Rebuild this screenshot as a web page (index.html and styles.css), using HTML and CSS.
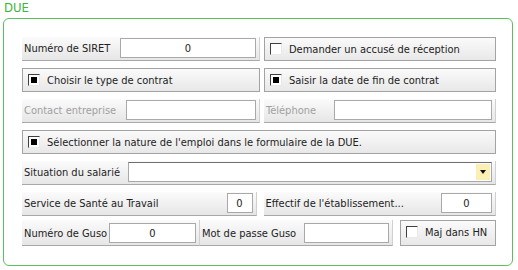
FILE: index.html
```html
<!DOCTYPE html>
<html lang="fr">

<head>
    <meta charset="UTF-8">
    <title>DUE</title>
    <link rel="stylesheet" href="styles.css">
</head>

<body>
    <div class="due">
        <div class="due-title">DUE</div>
        <div class="group">
            <div class="row">
                <div class="field left">
                    <span class="label">Numéro de SIRET</span>
                    <input class="box num siret" type="text" value="0">
                </div>
                <label class="check right">
                    <span class="tick"></span>Demander un accusé de réception
                </label>
            </div>
            <div class="row">
                <label class="check left">
                    <span class="tick on"></span>Choisir le type de contrat
                </label>
                <label class="check right">
                    <span class="tick on"></span>Saisir la date de fin de contrat
                </label>
            </div>
            <div class="row">
                <div class="field left disabled">
                    <span class="label">Contact entreprise</span>
                    <input class="box contact" type="text" disabled>
                </div>
                <div class="field right disabled">
                    <span class="label">Téléphone</span>
                    <input class="box phone" type="text" disabled>
                </div>
            </div>
            <div class="row">
                <label class="check full">
                    <span class="tick on"></span>Sélectionner la nature de l'emploi dans le formulaire de la DUE.
                </label>
            </div>
            <div class="row">
                <div class="field full">
                    <span class="label">Situation du salarié</span>
                    <div class="box combo">
                        <span class="combo-btn"></span>
                    </div>
                </div>
            </div>
            <div class="row">
                <div class="field sante">
                    <span class="label">Service de Santé au Travail</span>
                    <input class="box num small" type="text" value="0">
                </div>
                <div class="field effectif">
                    <span class="label">Effectif de l'établissement...</span>
                    <input class="box num medium" type="text" value="0">
                </div>
            </div>
            <div class="row last">
                <div class="field guso">
                    <span class="label">Numéro de Guso</span>
                    <input class="box num guso-num" type="text" value="0">
                </div>
                <div class="field pass">
                    <span class="label">Mot de passe Guso</span>
                    <input class="box pass-box" type="text">
                </div>
                <label class="check hn">
                    <span class="tick"></span>Maj dans HN
                </label>
            </div>
        </div>
    </div>
</body>

</html>
```

FILE: styles.css
```css
body {
    margin: 0;
    background-color: #fff;
    font-family: "DejaVu Sans Condensed", "DejaVu Sans", sans-serif;
    font-size: 11px;
    color: #222;
}

.due {
    padding: 2px 5px 0 3px;
}

.due-title {
    color: #3cb43c;
    font-size: 13px;
    height: 16px;
    line-height: 12px;
    padding-left: 1px;
}

.group {
    border: 1px solid #5cbf5c;
    border-radius: 6px;
    padding: 18px 16px 0 18px;
    box-sizing: border-box;
    height: 248px;
    display: flex;
    flex-direction: column;
    gap: 7px;
}

.row {
    display: flex;
    gap: 4px;
    height: 24px;
}

.row.last {
    margin-top: -3px;
    height: 26px;
}

.left {
    width: 238px;
}

.right {
    width: 232px;
}

.full {
    width: 474px;
}

/* label + input strip */
.field {
    display: flex;
    align-items: flex-start;
    box-sizing: border-box;
    padding: 1px 3px 0 2px;
    background: linear-gradient(#fbfbfb, #e6e6e6);
    border-bottom: 1px solid #a8a8a8;
    border-right: 1px solid #d0d0d0;
}

.field .label {
    flex: 1;
    line-height: 21px;
    white-space: nowrap;
}

.field.disabled .label {
    color: #a0a0a0;
}

.box {
    box-sizing: border-box;
    height: 20px;
    border: 1px solid #a9a9a9;
    background: #fff;
    font: inherit;
    color: #222;
    padding: 0 4px;
    margin: 0;
    outline: none;
}

.box.num {
    text-align: center;
}

.siret {
    width: 136px;
}

.contact {
    width: 130px;
}

.phone {
    width: 158px;
}

.combo {
    width: 364px;
    display: flex;
    justify-content: flex-end;
    align-items: center;
    padding: 0 1px;
    border-top-color: #6f6f6f;
}

.combo-btn {
    width: 14px;
    height: 16px;
    background: #fbefb6;
    position: relative;
}

.combo-btn::after {
    content: "";
    position: absolute;
    left: 4px;
    top: 6px;
    border-left: 3px solid transparent;
    border-right: 3px solid transparent;
    border-top: 4px solid #111;
}

.sante {
    width: 236px;
}

.small {
    width: 26px;
}

.effectif {
    width: 234px;
    margin-left: 3px;
}

.medium {
    width: 51px;
}

.guso {
    width: 178px;
    padding-top: 3px;
}

.guso-num {
    width: 87px;
}

.pass {
    width: 193px;
    margin-left: -4px;
    padding-top: 3px;
}

.pass-box {
    width: 85px;
}

/* checkbox strips */
.check {
    display: flex;
    align-items: center;
    box-sizing: border-box;
    border: 1px solid #a3a3a3;
    background: linear-gradient(#fafafa, #e8e8e8);
    padding-left: 5px;
    white-space: nowrap;
}

.tick {
    width: 12px;
    height: 12px;
    box-sizing: border-box;
    border-top: 1px solid #404040;
    border-left: 1px solid #404040;
    border-right: 1px solid #e8e8e8;
    border-bottom: 1px solid #e8e8e8;
    background: #fff;
    margin-right: 7px;
    position: relative;
}

.tick.on::after {
    content: "";
    position: absolute;
    left: 2px;
    top: 2px;
    width: 6px;
    height: 6px;
    background: #000;
}

.hn {
    width: 96px;
    margin-left: 3px;
    padding-left: 5px;
    align-items: flex-start;
    padding-top: 5px;
}
```
